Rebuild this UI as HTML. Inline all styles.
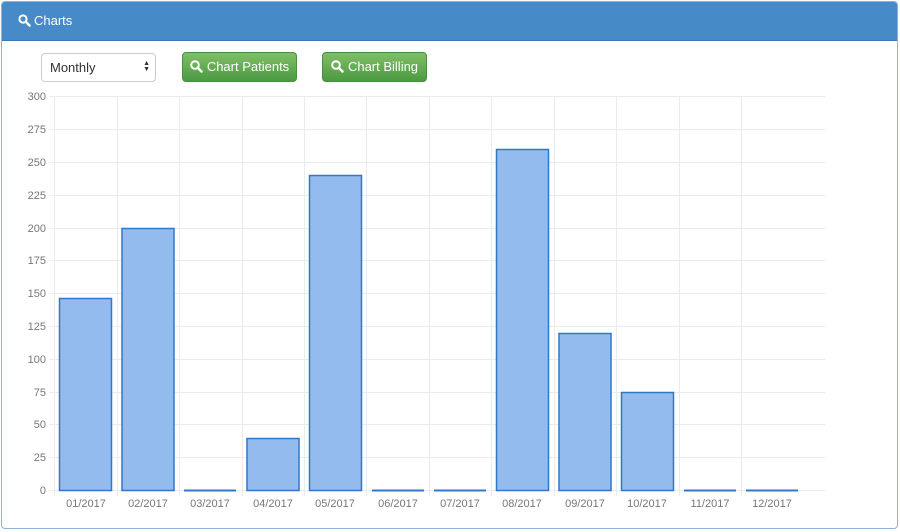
<!DOCTYPE html>
<html><head><meta charset="utf-8"><style>
html,body{margin:0;padding:0;background:#fff;width:900px;height:532px;overflow:hidden;font-family:"Liberation Sans",Arial,sans-serif}
.panel{position:absolute;left:1px;top:1px;width:897px;height:528px;border:1px solid #8fb2d8;border-radius:4px;box-sizing:border-box;overflow:hidden;background:#fff}
.head{height:38px;background:#468bc8;color:#fff;font-size:13px;line-height:38px;padding-left:16px;border-bottom:1px solid #3a78b6}
.head svg{vertical-align:-2px;margin-right:3px}
.sel{position:absolute;left:41px;top:53px;width:115px;height:29px;border:1px solid #ccc;border-radius:4px;box-sizing:border-box;font-size:13px;color:#333;line-height:27px;padding-left:8px;background:#fff}
.sel .ar{position:absolute;right:5px;top:7px;font-size:7px;line-height:6px;color:#333}
.btn{position:absolute;top:52px;height:30px;box-sizing:border-box;border:1px solid #4a8f3f;border-radius:4px;background:linear-gradient(#80bf66,#4b9a41);color:#fff;font-size:13px;line-height:28px;text-align:center}
.btn svg{vertical-align:-2px;margin-right:4px}
</style></head><body>
<div class="panel">
<div class="head"><svg width="13" height="13" viewBox="0 0 13 13"><circle cx="5" cy="5" r="3.6" fill="none" stroke="#fff" stroke-width="2"/><line x1="7.8" y1="7.8" x2="11.5" y2="11.5" stroke="#fff" stroke-width="2.4" stroke-linecap="round"/></svg>Charts</div>
</div>
<div class="sel">Monthly<div class="ar">▲<br>▼</div></div>
<div class="btn" style="left:182px;width:115px"><svg width="13" height="13" viewBox="0 0 13 13"><circle cx="5" cy="5" r="3.8" fill="none" stroke="#fff" stroke-width="2"/><line x1="7.8" y1="7.8" x2="11.5" y2="11.5" stroke="#fff" stroke-width="2.4" stroke-linecap="round"/></svg>Chart Patients</div>
<div class="btn" style="left:322px;width:105px"><svg width="13" height="13" viewBox="0 0 13 13"><circle cx="5" cy="5" r="3.8" fill="none" stroke="#fff" stroke-width="2"/><line x1="7.8" y1="7.8" x2="11.5" y2="11.5" stroke="#fff" stroke-width="2.4" stroke-linecap="round"/></svg>Chart Billing</div>
<svg style="position:absolute;left:0;top:0" width="900" height="532" font-family="Liberation Sans, Arial, sans-serif" font-size="11" fill="#777">
<g stroke="#ebebeb" stroke-width="1">
<line x1="49" y1="96.5" x2="825" y2="96.5"/><line x1="49" y1="129.5" x2="825" y2="129.5"/><line x1="49" y1="162.5" x2="825" y2="162.5"/><line x1="49" y1="195.5" x2="825" y2="195.5"/><line x1="49" y1="228.5" x2="825" y2="228.5"/><line x1="49" y1="260.5" x2="825" y2="260.5"/><line x1="49" y1="293.5" x2="825" y2="293.5"/><line x1="49" y1="326.5" x2="825" y2="326.5"/><line x1="49" y1="359.5" x2="825" y2="359.5"/><line x1="49" y1="392.5" x2="825" y2="392.5"/><line x1="49" y1="424.5" x2="825" y2="424.5"/><line x1="49" y1="457.5" x2="825" y2="457.5"/><line x1="49" y1="490.5" x2="825" y2="490.5"/>
<line x1="54.5" y1="96" x2="54.5" y2="496"/><line x1="117.5" y1="96" x2="117.5" y2="496"/><line x1="179.5" y1="96" x2="179.5" y2="496"/><line x1="242.5" y1="96" x2="242.5" y2="496"/><line x1="304.5" y1="96" x2="304.5" y2="496"/><line x1="366.5" y1="96" x2="366.5" y2="496"/><line x1="429.5" y1="96" x2="429.5" y2="496"/><line x1="491.5" y1="96" x2="491.5" y2="496"/><line x1="554.5" y1="96" x2="554.5" y2="496"/><line x1="616.5" y1="96" x2="616.5" y2="496"/><line x1="679.5" y1="96" x2="679.5" y2="496"/><line x1="741.5" y1="96" x2="741.5" y2="496"/>
</g>
<g text-anchor="end">
<text x="46" y="100">300</text><text x="46" y="133">275</text><text x="46" y="166">250</text><text x="46" y="199">225</text><text x="46" y="232">200</text><text x="46" y="264">175</text><text x="46" y="297">150</text><text x="46" y="330">125</text><text x="46" y="363">100</text><text x="46" y="396">75</text><text x="46" y="428">50</text><text x="46" y="461">25</text><text x="46" y="494">0</text>
</g>
<g fill="#93bbed" stroke="#2f78cc" stroke-width="1.5">
<rect x="59.5" y="298.5" width="52" height="192"/>
<rect x="122" y="228.5" width="52" height="262"/>
<rect x="247" y="438.5" width="52" height="52"/>
<rect x="309.5" y="175.5" width="52" height="315"/>
<rect x="496.5" y="149.5" width="52" height="341"/>
<rect x="559" y="333.5" width="52" height="157"/>
<rect x="621.5" y="392.5" width="52" height="98"/>
</g>
<g stroke="#2f78cc" stroke-width="2">
<line x1="184" y1="490.5" x2="236" y2="490.5"/><line x1="372" y1="490.5" x2="424" y2="490.5"/><line x1="434" y1="490.5" x2="486" y2="490.5"/><line x1="684" y1="490.5" x2="736" y2="490.5"/><line x1="746" y1="490.5" x2="798" y2="490.5"/>
</g>
<g text-anchor="middle">
<text x="86" y="507">01/2017</text><text x="148" y="507">02/2017</text><text x="210" y="507">03/2017</text><text x="273" y="507">04/2017</text><text x="335" y="507">05/2017</text><text x="398" y="507">06/2017</text><text x="460" y="507">07/2017</text><text x="522" y="507">08/2017</text><text x="585" y="507">09/2017</text><text x="647" y="507">10/2017</text><text x="710" y="507">11/2017</text><text x="772" y="507">12/2017</text>
</g>
</svg>
</body></html>
